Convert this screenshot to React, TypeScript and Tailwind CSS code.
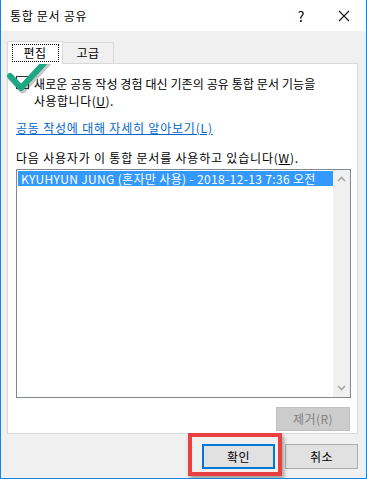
import React from "react";

const FONT = { fontFamily: '"Noto Sans CJK KR", "Noto Sans", sans-serif' };

function ChevronUp() {
  return (
    <svg width="9" height="6" viewBox="0 0 9 6">
      <path d="M1 5 L4.5 1.5 L8 5" fill="none" stroke="#a6a6a6" strokeWidth="1.6" />
    </svg>
  );
}

function ChevronDown() {
  return (
    <svg width="9" height="6" viewBox="0 0 9 6">
      <path d="M1 1 L4.5 4.5 L8 1" fill="none" stroke="#a6a6a6" strokeWidth="1.6" />
    </svg>
  );
}

export default function App() {
  return (
    <div
      className="relative w-[367px] h-[479px] flex flex-col bg-[#f0f0f0] border-x border-b border-[#1883d7] text-[12px] text-black leading-none overflow-hidden"
      style={FONT}
    >
      {/* title bar */}
      <div className="h-[31px] bg-white flex items-center pl-[9px] shrink-0">
        <span className="flex-1 tracking-[0.7px]">통합 문서 공유</span>
        <span className="w-[14px] text-[14px] mr-[30px] text-center">?</span>
        <svg width="12" height="12" viewBox="0 0 12 12" className="mr-[16px]">
          <path d="M1 1 L11 11 M11 1 L1 11" stroke="#111" strokeWidth="1.1" />
        </svg>
      </div>

      {/* tabs */}
      <div className="flex items-end pl-[6px] mt-[10px] h-[23px] relative z-10">
        <div className="w-[56px] h-[23px] bg-white border-x border-t border-[#d9d9d9] flex items-start justify-center pt-[2px]">
          <div className="w-[47px] h-[18px] border border-dotted border-black flex items-center justify-center tracking-[0.5px]">
            편집
          </div>
        </div>
        <div className="w-[51px] h-[21px] bg-[#f0f0f0] border-t border-r border-[#d9d9d9] flex items-center justify-center mb-px tracking-[0.5px]">
          고급
        </div>
      </div>

      {/* panel */}
      <div className="ml-[6px] w-[351px] h-[371px] -mt-px bg-white border border-[#d9d9d9] flex flex-col pl-[8px] pr-[4px] pt-[11px]">
        <div className="flex items-start">
          <div className="w-[13px] h-[13px] border border-[#333] bg-white shrink-0 mt-px" />
          <div className="ml-[5px] leading-[17px] whitespace-nowrap">
            <div className="tracking-[0.1px]">새로운 공동 작성 경험 대신 기존의 공유 통합 문서 기능을</div>
            <div className="tracking-[0.5px]">
              사용합니다(<span className="underline">U</span>).
            </div>
          </div>
        </div>
        <div className="mt-[11px] text-[#0066cc] underline leading-[16px] tracking-[0.8px]">공동 작성에 대해 자세히 알아보기(L)</div>
        <div className="mt-[14px] leading-[16px] tracking-[0.8px]">
          다음 사용자가 이 통합 문서를 사용하고 있습니다(<span className="underline">W</span>).
        </div>

        {/* list box */}
        <div className="mt-[3px] w-[335px] h-[229px] border border-[#828790] flex">
          <div className="flex-1 pl-px pt-px">
            <div className="h-[15px] bg-[#3399ff] text-white flex items-center pl-[3px] tracking-[0.35px] whitespace-nowrap">
              KYUHYUN JUNG (혼자만 사용) - 2018-12-13 7:36 오전
            </div>
          </div>
          <div className="w-[17px] bg-[#f0f0f0] flex flex-col items-center justify-between py-[6px]">
            <ChevronUp />
            <ChevronDown />
          </div>
        </div>

        <div className="flex justify-end mt-[9px] pr-[3px]">
          <div className="w-[74px] h-[24px] bg-[#cccccc] border border-[#bfbfbf] text-[#838383] flex items-center justify-center tracking-[0.4px]">
            제거(R)
          </div>
        </div>
      </div>

      {/* bottom buttons */}
      <div className="flex justify-end gap-[10px] pr-[8px] mt-[10px]">
        <div className="w-[73px] h-[25px] bg-[#e1e1e1] border-2 border-[#0078d7] flex items-center justify-center tracking-[0.5px]">
          확인
        </div>
        <div className="w-[73px] h-[25px] bg-[#e1e1e1] border border-[#adadad] flex items-center justify-center tracking-[0.5px]">
          취소
        </div>
      </div>

      {/* annotation: red highlight box */}
      <div className="absolute left-[187px] top-[433px] w-[94px] h-[43px] border-[4px] border-[#e8413f] shadow-[2px_3px_4px_rgba(0,0,0,0.35)]" />

      {/* annotation: green check */}
      <svg className="absolute left-[5px] top-[57px]" width="46" height="40" viewBox="0 0 46 40">
        <path d="M4 19 L15 31 L40 4" fill="none" stroke="rgba(0,0,0,0.22)" strokeWidth="7" strokeLinecap="round" strokeLinejoin="round" transform="translate(1.5,2)" />
        <path d="M4 19 L15 31 L40 4" fill="none" stroke="#1fa784" strokeWidth="6" strokeLinecap="round" strokeLinejoin="round" />
      </svg>
    </div>
  );
}
